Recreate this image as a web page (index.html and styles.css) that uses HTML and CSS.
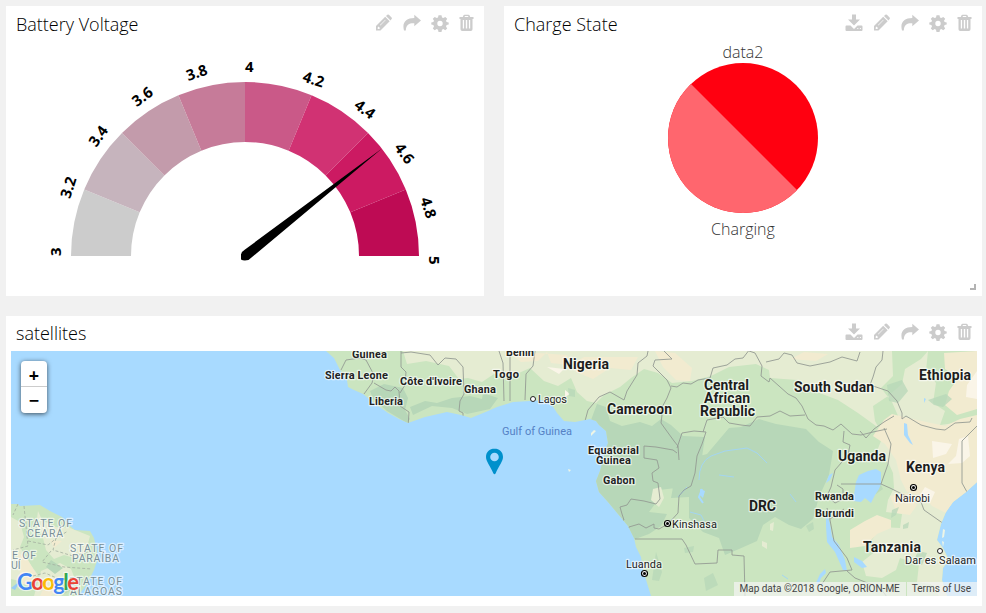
FILE: index.html
```html
<!DOCTYPE html>
<html lang="en">
<head>
<meta charset="utf-8">
<title>Dashboard</title>
<link rel="stylesheet" href="styles.css">
</head>
<body>
<svg class="sprite" aria-hidden="true">
  <symbol id="download" viewBox="0 0 18 18"><path fill-rule="evenodd" d="M7 .5h4v5h4l-6 6-6-6h4zM1.500 11.500h4L9 15l3.500-3.500h4q1 0 1 1V16q0 1-1 1h-15q-1 0-1-1v-3.500q0-1 1-1zM12.300 14v1h1v-1zM14.900 14v1h1v-1z"/></symbol>
  <symbol id="pencil" viewBox="0 0 18 18"><path fill-rule="evenodd" d="M1 16.500V12L10.200 2.800l4.500 4.500L5.500 16.500zM2.700 13.500v1.400h1.600l.7-.8-1.600-1.600zM5 11l.4.4 5.300-5.300-.4-.4zM11 2l1.300-1.200q.8-.8 1.600 0l2.700 2.700q.8.8 0 1.600L15.500 6.500z"/></symbol>
  <symbol id="share" viewBox="0 0 18 18"><path d="M11.300.8l6.700 5.800-6.700 5.600V9.200C6.500 9 3 10.200 2.800 16.500H1C-1.200 8.500 3 4 11.300 4z"/></symbol>
  <symbol id="cog" viewBox="0 0 18 18"><path fill-rule="evenodd" d="M7.500 1.300h3l.5 2.200 1.300.6 2-1.200 1.900 1.900-1.200 2 .6 1.300 2.100.5v2l-2.100.5-.6 1.300 1.200 2-1.900 1.900-2-1.200-1.300.6-.5 2.200h-3L7 15.700l-1.300-.6-2 1.200-1.900-1.900 1.200-2-.6-1.300-2.100-.5v-2l2.100-.5.6-1.300-1.200-2 1.900-1.900 2 1.200L7 3.500zM9 6.800a2.700 2.700 0 100 5.400 2.700 2.700 0 000-5.400z"/></symbol>
  <symbol id="trash" viewBox="0 0 15 18"><path fill-rule="evenodd" d="M3.800 3l.6-1.600Q4.700.8 5.500.8h4q.8 0 1.100.6L11.200 3h3.300v2h-1v10.300q0 1.700-1.700 1.700H3.200q-1.700 0-1.700-1.700V5h-1V3zm1.700 0h4L9 2.100H6zM3.800 6v8.500h1.300V6zm3 0v8.500h1.400V6zm3.100 0v8.500h1.300V6z"/></symbol>
</svg>
<main class="board">
  <section class="card">
    <header class="head"><h2>Battery Voltage</h2>
      <nav class="tools"><svg><use href="#pencil"/></svg><svg><use href="#share"/></svg><svg><use href="#cog"/></svg><svg class="narrow"><use href="#trash"/></svg></nav>
    </header>
    <svg class="chart" viewBox="6 42 478 254">
      <g transform="translate(245 256)">
        <path fill="#ccc" d="M-174 0A174 174 0 0 1-160.760-66.590L-105.320-43.630A114 114 0 0 0-114 0z"/>
        <path fill="#c6b4bd" d="M-160.760-66.590A174 174 0 0 1-123.040-123.040L-80.610-80.610A114 114 0 0 0-105.320-43.630z"/>
        <path fill="#c39bab" d="M-123.040-123.040A174 174 0 0 1-66.590-160.760L-43.630-105.320A114 114 0 0 0-80.610-80.610z"/>
        <path fill="#c67b99" d="M-66.590-160.760A174 174 0 0 1 0-174V-114A114 114 0 0 0-43.630-105.320z"/>
        <path fill="#ca5988" d="M0-174A174 174 0 0 1 66.590-160.760L43.630-105.320A114 114 0 0 0 0-114z"/>
        <path fill="#d13273" d="M66.590-160.760A174 174 0 0 1 123.040-123.040L80.610-80.610A114 114 0 0 0 43.630-105.320z"/>
        <path fill="#cc1a62" d="M123.040-123.040A174 174 0 0 1 160.760-66.590L105.320-43.630A114 114 0 0 0 80.610-80.610z"/>
        <path fill="#be0b54" d="M160.760-66.590A174 174 0 0 1 174 0H114A114 114 0 0 0 105.320-43.630z"/>
        <path d="M137-107.500L3.500 4Q-1.500 5-4 3.500V-1.500Q-3.500-4.500 0-6.500z"/>
        <g class="ticks">
          <text transform="rotate(-90) translate(0 -184)">3</text>
          <text transform="rotate(-72) translate(0 -184)">3.2</text>
          <text transform="rotate(-54) translate(0 -184)">3.4</text>
          <text transform="rotate(-36) translate(0 -184)">3.6</text>
          <text transform="rotate(-18) translate(0 -184)">3.8</text>
          <text transform="translate(0 -184)">4</text>
          <text transform="rotate(18) translate(0 -184)">4.2</text>
          <text transform="rotate(36) translate(0 -184)">4.4</text>
          <text transform="rotate(54) translate(0 -184)">4.6</text>
          <text transform="rotate(72) translate(0 -184)">4.8</text>
          <text transform="rotate(90) translate(0 -184)">5</text>
        </g>
      </g>
    </svg>
  </section>

  <section class="card">
    <header class="head"><h2>Charge State</h2>
      <nav class="tools"><svg><use href="#download"/></svg><svg><use href="#pencil"/></svg><svg><use href="#share"/></svg><svg><use href="#cog"/></svg><svg class="narrow"><use href="#trash"/></svg></nav>
    </header>
    <svg class="chart" viewBox="504 42 478 254">
      <clipPath id="half"><path d="M660 53L828 221H660z"/></clipPath>
      <circle cx="743" cy="138" r="75" fill="#ff0010"/>
      <circle cx="743" cy="138" r="75" fill="#ff666e" clip-path="url(#half)"/>
      <g class="pie-label"><text x="743" y="58">data2</text><text x="743" y="235">Charging</text></g>
      <path d="M975 284v5h-5" fill="none" stroke="#b3b3b3" stroke-width="2"/>
    </svg>
  </section>

  <section class="card wide">
    <header class="head"><h2>satellites</h2>
      <nav class="tools"><svg><use href="#download"/></svg><svg><use href="#pencil"/></svg><svg><use href="#share"/></svg><svg><use href="#cog"/></svg><svg class="narrow"><use href="#trash"/></svg></nav>
    </header>
    <div class="map">
      <svg class="tiles" viewBox="11 351 966 245">
        <defs>
          <clipPath id="land"><path d="M326 351L334 358 340 370 347 380 348 387 354 390 363 394 374 403 388 413 399 419 408 423 425 417 447 412 461 415 471 418 488 411 497 407 513 402 530 401 545 400 552 405 557 413 564 421 575 422 590 419 596 421 599 425 606 431 608 443 605 451 603 460 600 471 596 481 599 492 608 502 618 514 628 526 634 538 636 547 641 557 643 570 647 583 651 596H947L942 580 943 568 949 560 943 548 937 540 941 524 946 512 953 502 966 492 977 482V351z"/></clipPath>
          <clipPath id="brazil"><path d="M11 504H18L20 506 40 505 50 511 62 517 69 525 75 530 90 531 94 538 97 551 97 561 94 570 87 584 78 596H11z"/></clipPath>
        </defs>
        <g clip-path="url(#brazil)">
          <path fill="#cbe5c0" d="M11 500h100v96H11z"/>
          <path fill="#e5ecd2" d="M38 511l4 9 14 7 14 1 20 8-4 15-8 8-14-4-10 4-8-9-4-16-6-8zM11 517l9 5 4 15-4 10 8 14 10 14-10 8-17-4zM41 571l19-8 11 6 6 15-16 12H34z"/>
          <path fill="#f2ebd0" d="M18 552l10 8 8 14-3 12-12-2zM50 540l12 1-8 7zM45 585l13 1-7 10H40z"/>
          <path fill="#b7d7b8" d="M51 560l12 8-8 6-9-7zM62 584l14-8-1 12-11 6z"/>
          <path class="dash" d="M24 506l4 40-15 4M18 504l-5 11M28 541l20 4 10-8 10-6M56 538l-3 12 20 6 20-5M51 551l-9 11 22 5 28 2M33 576l12-3 14 6 15 10"/>
          <path fill="#98cdf5" d="M11 588l9-7-5 9z"/>
        </g>
        <g clip-path="url(#land)">
          <path fill="#cbe5c0" d="M300 351h677v245H300z"/>
          <path fill="#e5ecd2" d="M403 351l4 13 19-3 23 5 10 13 9-1 14 4 12-8 16 3 20-9 14 13 14 5 13-8 6 14 10 9 9 2 8-8 16-8 11-9 13-9 14 4 14 10 20-2 19-5 18-9 27-3 13 6 1 8 27 2 12 9 29 11 20 13 18 13 14 7 12-8-10-23-11-14 12-12-1-25zM928 351l-2 20 10 12-3 20 12 8-5 14 37-5v176h-38l-8-12-14-2 2-18-19-6-4 12-14 8-16-2-4-14 15-12-5-10 8-13 20 1 2-14-16-2 2-12 6-12-1-15-4-9-12-13 6-15-8-15-2-15 15-10 14-12 3-15 16-10z"/>
          <path fill="#f2ebd0" d="M507 351l14 11 17-1 9-9 4 11 19 2 14-8h54l-7 13-21-2-17 11-17-7-9-17zM655 351l20 2 17 15-2 13-14-1-13-13zM791 359l13-7 24 2-12 7zM884 420l8-6 12 3 18 4 23 5 15-7 17-4v71l-16 14-13 14-16-8-9-10-16-4-6-12-5-20-11-16-12-8zM944 353l33-2v58l-20 6-12-10 4-14 10-14-14-8zM850 530l15-9 12-6 14 5 0 8-14 6-12 12-15 2zM890 496l17-3 10 12-7 10-13-2z"/>
          <path fill="#faf5e8" d="M932 441l20 3-6 10-13 4zM948 464l8-8 3-17 9-3 2 20-8 7zM967 385l10-14v28l-11-2zM925 487l10 5-5 11-10-8zM547 367l17 2-5 5zM565 390l5 4-5 3z"/>
          <path fill="#b7d7b8" d="M370 391l14-7 19 4 5 10-3 12 5 9-3 4-20-12-14-12zM437 403l15-5 18-2 12 3 1-6 15 5-8 11-23 5-15-6-20-2-19 9-3-8 15-6zM591 420l6-16 9 3 4 14 12 5 18-4 12 4 9-7 10 6 12 11 22 1-3 20-6 20-2 11-14 9-4-9-17 2-4 14-6 8 18 2-6 12-12 8-22 8-32-24-8-24 10-40zM729 428l12-1 18-8 17 5 30 5 13 13 14 9-4 24-10 22-6 22-12 10-12-4-14-8-12 8-6 16-18 8-14 6-6-17-16-6-14-14 0-21-18 1 5-27 6-18 7 6 18-5z"/>
          <path fill="#b7d7b8" opacity=".75" d="M887 385l15-5 6 11-10 12-9-2zM928 400l18-6 6 5-9 8-9-2zM634 528l12-3 2 8-11 5zM656 552l6 20-3 9-7-1zM684 548l10-2-1 6-8 1zM704 578l9-5 5 12-12 6zM918 551l9 2-5 12-9-2zM870 488l10-5 3 6-7 5zM806 526l7-4 1 7-5 3zM568 388l7 2 0 7-6-1zM892 510l7-3-3 8-5 3zM903 525l6-3-1 6-5 1z"/>
          <path fill="#e5ecd2" d="M653 489l8-2 3 11-5 9-8-7zM762 541l5 2 0 6-5-3zM770 524l4-2-1 9-3-1z"/>
          <path fill="#a8daff" d="M856 482l3-7 9-4 8-2 5 3v12l-2 5-4 6-4 8-6-5-4 4-8-1zM904 423l3 1 1 11 5 10-3-2-6-8zM826 511l4 13 2 13 7 8 6 15 2 11-4-1-8-18-8-10-1-16zM854 557l8 4 5 6-5 1-8-6zM825 569l1 4-5 5-3 9-2-4 4-9zM833 473l-3 7-4 3 3-8zM924 398l2 1-2 4zM700 489l5 2-2 7-3-3z"/>
          <path class="river" d="M699 480q0-18 12-24l14-5 22-3 10 5 10 10M719 475l15 2M790 494l6 8M690 512l11 3 3 6M678 497l9-10M782 575l6 4"/>
          <path fill="none" stroke="#a8daff" stroke-width="2" d="M702 489l-3 8 4 6"/>
          <path class="border" d="M341 370l5-10 14-2 6 2 8 15-2 8-8 11M374 383l12 7 5 1 4-4 4 4 1 15 9 6-1 16M401 351v16l5 5-1 13-5 8M401 353l10-1 19 3 8 10 7-7 11 1 7 8 1 27-4 7-1 10 4 2v6M499 351l4 12 1 38M510 355v46M535 351l-2 15-7 8-1 26M648 351l-1 5-9 7-1 12-10 16-3 9-7-4-7-4-11 5-11 13-3 11M664 351l8 8-17 1-2 6 14 14 4 8-4 10-7 13 2 4-1 8 5 7 8 11 4 5 1 14M671 386l6 1 6-4 8 1 7-4 12-2 3-10 14-3 8-6 8-1 7-9M677 453l-4-3-17-3-12-1v12l13 2 2 8-7 5 1 8 5 2 2 16-4 5-12-3-13-2-4 6-7 2 2 7 2 6-10 3M677 448l5-15 12-2 12 1-4 12-5 12-2 17-4 13-7 4-5 6-1 17-10 11-9 5-5-1v-4l-8 4-7-4-10 3-4 7M635 539h47l4 6 9 19 22-1 1-13h14v5l12 1 1 40M703 432l4-12 16-3 6 6 12 2 9 1 7-9 13-1 10-5 10 5 15-1M749 351l6 2 7 13-1 10 8 6 1-4 9 8 9 8 8 4 6 8 6 13 8 6 8 1 9 4 8-6 11 10 9 1 12-3 14-3M766 362l13-3 5-6 8 2 5 8 13 3 20-4 12-5 15 4 3-9M883 351l-1 9-6 7-3 10-3 8 18 6 9 10 5 12v6l4-3 15 9 15 4 9 1 10-7 15-1 2-4M977 426l-15 15v42l5 9M894 416l-10 6-10 7-8 9-6-7M884 428l7 16-3 20-7 20 9 4 18 9 13 5 3 8 20 14M841 484h40M844 431l-1 11 7 3-2 10-13 15-4 17-4 9 8 7 8-4v-10l-6-4M827 508l3 12 4 21 13 17 5 12-22 2-8 12M830 519l14-10M847 571l8 7 15 6 11 5 6 8"/>
        </g>
        <path d="M568 469l3 1-2 2zM591 433l3-3 2 1-5 5z" fill="#eef5e6"/>
        <path d="M943 529l2 1-1 7-2 1zM942 541l2 1-1 5z" fill="#eef5e6"/>
        <g class="water-label"><text x="502" y="434.500" textLength="70">Gulf of Guinea</text></g>
        <g class="state">
          <text x="19" y="527" textLength="53">STATE OF</text><text x="27" y="537" textLength="36">CEARÁ</text>
          <text x="70" y="552" textLength="53">STATE OF</text><text x="72" y="562" textLength="47">PARAÍBA</text>
          <text x="12" y="559" textLength="24">E OF</text><text x="11" y="569">UÍ</text>
          <text x="69" y="585" textLength="53">STATE OF</text><text x="70" y="595" textLength="52">ALAGOAS</text>
        </g>
        <g class="minor">
          <text x="352" y="358" textLength="35">Guinea</text><text x="325" y="379" textLength="63">Sierra Leone</text>
          <text x="400" y="385" textLength="62">Côte d'Ivoire</text><text x="369" y="405" textLength="34">Liberia</text>
          <text x="464" y="393" textLength="32">Ghana</text><text x="493" y="378" textLength="26">Togo</text><text x="506" y="356" textLength="28">Benin</text>
          <text x="588" y="454" textLength="51">Equatorial</text><text x="596" y="464" textLength="35">Guinea</text><text x="603" y="484" textLength="32">Gabon</text>
          <text x="815" y="500" textLength="39">Rwanda</text><text x="815" y="517" textLength="39">Burundi</text>
        </g>
        <g class="major">
          <text x="563" y="369" textLength="46">Nigeria</text><text x="607" y="414" textLength="65">Cameroon</text>
          <text x="704" y="390" textLength="45">Central</text><text x="704" y="403" textLength="46">African</text><text x="700" y="416" textLength="55">Republic</text>
          <text x="794" y="392" textLength="80">South Sudan</text><text x="919" y="380" textLength="52">Ethiopia</text>
          <text x="838" y="461" textLength="48">Uganda</text><text x="906" y="472" textLength="39">Kenya</text><text x="749" y="511" textLength="27">DRC</text><text x="863" y="552" textLength="58">Tanzania</text>
        </g>
        <g class="city">
          <text x="538" y="403" textLength="29">Lagos</text><text x="672" y="528" textLength="45">Kinshasa</text><text x="626" y="568" textLength="36">Luanda</text><text x="895" y="502" textLength="35">Nairobi</text><text x="905" y="564" textLength="71">Dar es Salaam</text>
        </g>
        <g class="town"><circle cx="533" cy="399" r="2.500"/><circle cx="940" cy="551" r="2.500"/></g>
        <g class="capital"><circle cx="667.500" cy="523.500" r="3"/><circle cx="644.500" cy="573.500" r="3"/><circle cx="913.500" cy="487.500" r="3"/></g>
        <g><circle cx="667.500" cy="523.500" r="1.500"/><circle cx="644.500" cy="573.500" r="1.500"/><circle cx="913.500" cy="487.500" r="1.500"/></g>
        <path fill="#0090cc" fill-rule="evenodd" d="M494.500 448.500c-5 0-8.500 3.700-8.500 8.400 0 4.300 4.500 9.600 7.300 16.300q1.200 2 2.400 0c2.800-6.700 7.300-12 7.300-16.300 0-4.700-3.500-8.400-8.500-8.400zm0 4.200a4.300 4.300 0 110 8.600 4.300 4.300 0 010-8.600z"/>
        <text class="brand" x="17" y="589.500" textLength="62"><tspan fill="#4285f4">G</tspan><tspan fill="#ea4335">o</tspan><tspan fill="#fbbc05">o</tspan><tspan fill="#4285f4">g</tspan><tspan fill="#34a853">l</tspan><tspan fill="#ea4335">e</tspan></text>
      </svg>
      <div class="zoom"><span>+</span><span>−</span></div>
      <div class="credit"><span>Map data ©2018 Google, ORION-ME</span><span>Terms of Use</span></div>
    </div>
  </section>
</main>
</body>
</html>
```
FILE: styles.css
```css
* { box-sizing: border-box; }
body { margin: 0; background: #f1f1f1; font-family: "Open Sans", sans-serif; color: #000; overflow: hidden; }
.sprite { display: none; }
.board { display: grid; grid-template-columns: 478px 478px; grid-auto-rows: 290px; gap: 20px; padding: 6px; }
.card { background: #fff; overflow: hidden; }
.wide { grid-column: span 2; }
.head { display: flex; justify-content: space-between; align-items: center; height: 36px; padding: 0 10px; }
.wide .head { height: 35px; padding-bottom: 2px; }
h2 { margin: 0; font-size: 18px; font-weight: 300; line-height: 26px; }
.tools { display: flex; gap: 10px; fill: #ccc; margin-top: -2px; }
.tools svg { display: block; width: 18px; height: 18px; }
.tools .narrow { width: 15px; }
.chart { display: block; width: 478px; height: 254px; }
.ticks { font-size: 15px; font-weight: 700; }
.pie-label { font-size: 16px; font-weight: 300; fill: #333; text-anchor: middle; }
.map { position: relative; width: 966px; height: 245px; margin-left: 5px; background: #a8daff; font-family: Roboto, sans-serif; }
.tiles { display: block; width: 966px; height: 245px; }
.tiles text { paint-order: stroke; stroke: rgba(255, 255, 255, .6); stroke-width: 2.500px; stroke-linejoin: round; }
.border { fill: none; stroke: #949b93; stroke-width: .9; stroke-linejoin: round; }
.dash { fill: none; stroke: #a3ae9f; stroke-width: .8; stroke-dasharray: 3 2; }
.river { fill: none; stroke: #a3d5f1; stroke-width: 1; }
.minor { font-size: 11px; font-weight: 700; fill: #222; }
.major { font-size: 14px; font-weight: 700; fill: #1d1d1d; }
.city { font-size: 11px; fill: #222; }
.state { font-size: 10.500px; fill: #788f99; }
.tiles .water-label text { font-size: 11px; fill: #5581c5; stroke: none; }
.town { fill: #fff; stroke: #222; stroke-width: 1; }
.capital { fill: #fff; stroke: #000; stroke-width: 1.200; }
.tiles .brand { font-family: Lato, sans-serif; font-size: 22px; font-weight: 700; }
.zoom { position: absolute; left: 10px; top: 10px; width: 26px; height: 52px; border-radius: 4px; background: #fff; box-shadow: 0 1px 5px rgba(0, 0, 0, .65); font: 700 18px/26px "Open Sans", sans-serif; text-align: center; }
.zoom span { display: block; height: 26px; line-height: 28px; }
.zoom span + span { line-height: 26px; }
.zoom span:first-child { border-bottom: 1px solid #ccc; }
.credit { position: absolute; right: 0; bottom: 0; display: flex; height: 14px; font-size: 10px; line-height: 14px; color: #444; background: rgba(245, 245, 245, .7); }
.credit span { padding: 0 6px 0 5px; white-space: nowrap; }
.credit span + span { border-left: 1px solid #cbe5c0; }
```
